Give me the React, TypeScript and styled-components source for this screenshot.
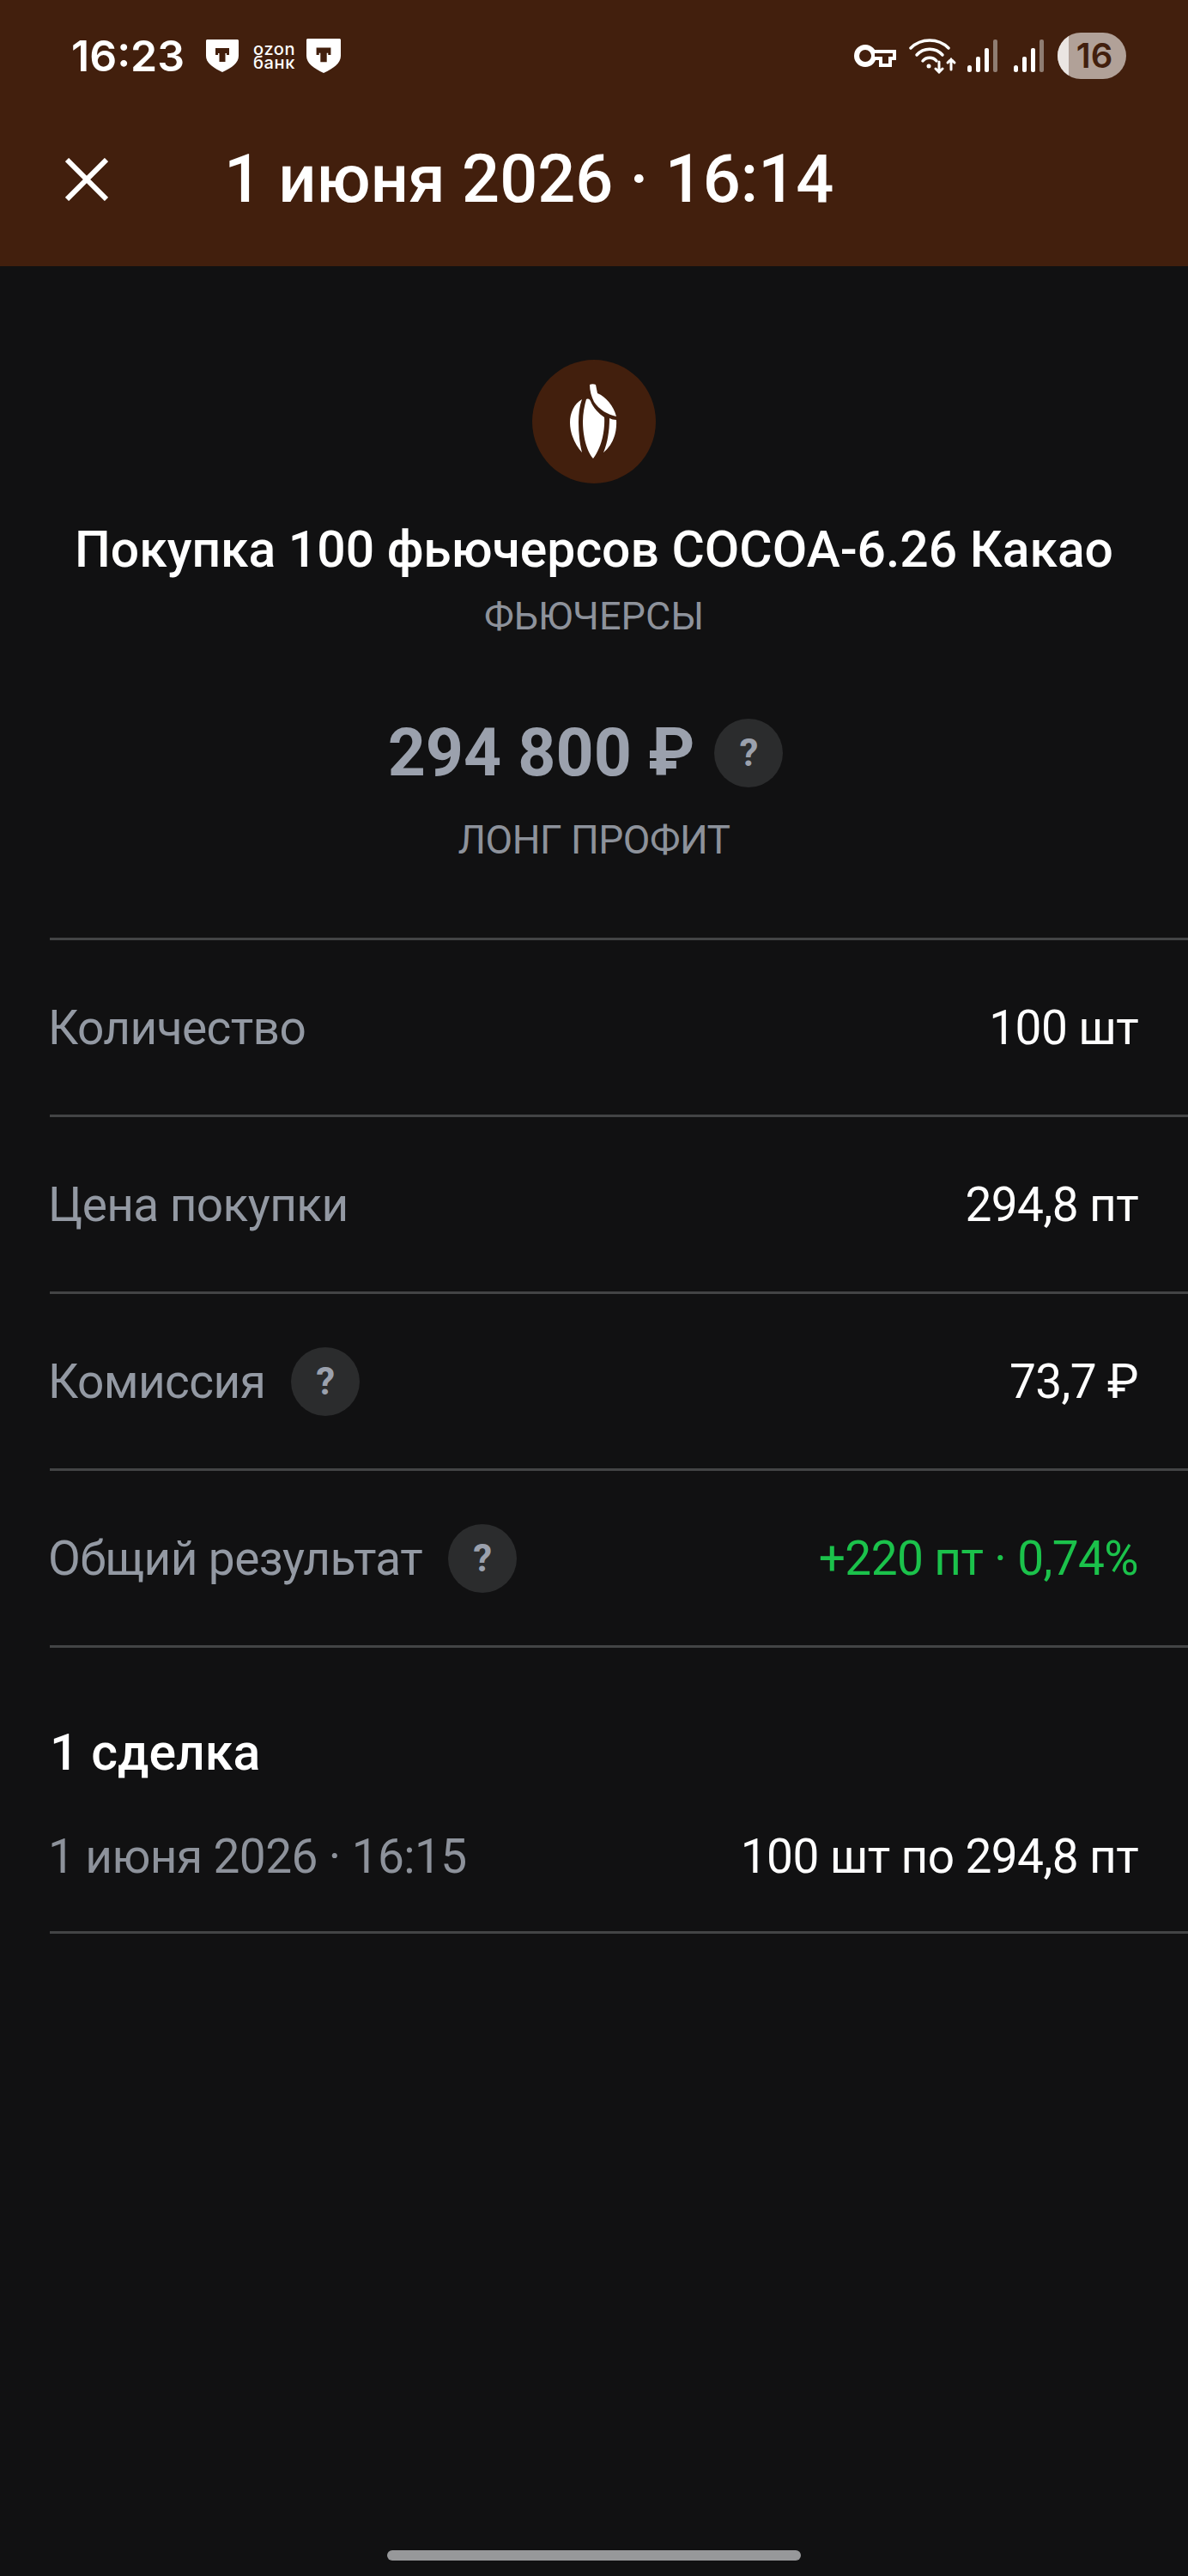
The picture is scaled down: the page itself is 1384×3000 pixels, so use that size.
import styled, { createGlobalStyle } from 'styled-components';

const GlobalStyle = createGlobalStyle`
  html, body {
    margin: 0;
    padding: 0;
    background: #111112;
  }
  body {
    font-family: Roboto, "Noto Sans", sans-serif;
  }
`;

const Page = styled.div`
  display: flex;
  flex-direction: column;
  width: 1384px;
  height: 3000px;
  overflow: hidden;
  background: #111112;
  color: #fff;
`;

const TopBar = styled.header`
  flex: none;
  height: 310px;
  background: #421f0d;
`;

const StatusBar = styled.div`
  display: flex;
  align-items: center;
  justify-content: space-between;
  height: 130px;
  padding: 0 72px 0 83px;
`;

const StatusGroup = styled.div`
  display: flex;
  align-items: center;
`;

const StatusIcon = styled.span<{ $left: number }>`
  display: flex;
  margin-left: ${(p) => p.$left}px;
`;

const Time = styled.span`
  font-family: Inter, Roboto, sans-serif;
  font-size: 50px;
  font-weight: 600;
  line-height: 58px;
  margin-right: 25px;
`;

const OzonMark = styled.div`
  margin: 0 12px 0 17px;
  font-family: Inter, Roboto, sans-serif;
  font-size: 20px;
  font-weight: 500;
  line-height: 16px;
  letter-spacing: 0.6px;
  white-space: pre-line;
`;

const Battery = styled.div`
  position: relative;
  width: 80px;
  height: 54px;
  margin-left: 16px;
  border-radius: 27px;
  overflow: hidden;
  background: #b1a198;
  color: #421f0d;
  font-family: Inter, Roboto, sans-serif;
  font-size: 40px;
  font-weight: 600;
  line-height: 54px;
  text-align: center;
  text-indent: 6px;

  &::before {
    content: '';
    position: absolute;
    left: 0;
    top: 0;
    bottom: 0;
    width: 13px;
    background: #eae5e2;
  }
`;

const TitleRow = styled.div`
  display: flex;
  align-items: center;
  height: 90px;
  margin-top: 34px;
  padding-left: 76px;
`;

const CloseButton = styled.div`
  display: flex;
  width: 185px;
`;

const Title = styled.h1`
  margin: 0;
  font-size: 77.5px;
  font-weight: 500;
  line-height: 90px;
  white-space: nowrap;
`;

const Hero = styled.section`
  display: flex;
  flex-direction: column;
  align-items: center;
  padding-top: 109px;
`;

const InstrumentLogo = styled.div`
  display: flex;
  align-items: center;
  justify-content: center;
  width: 144px;
  height: 144px;
  border-radius: 50%;
  background: #421f0d;
`;

const InstrumentName = styled.h2`
  margin: 39px 0 0;
  font-size: 58.8px;
  font-weight: 500;
  line-height: 76px;
  white-space: nowrap;
`;

const InstrumentType = styled.div`
  color: #8d929b;
  font-size: 45px;
  line-height: 60px;
  margin-top: 10px;
`;

const AmountRow = styled.div`
  display: flex;
  align-items: center;
  gap: 23px;
  margin-top: 84px;
  padding-right: 20px;
`;

const Amount = styled.span`
  color: #9ba1ad;
  font-size: 77px;
  font-weight: 700;
  line-height: 90px;
`;

const Caption = styled.div`
  color: #8d929b;
  font-size: 46px;
  letter-spacing: -0.5px;
  line-height: 60px;
  margin-top: 26px;
`;

const HelpBadge = styled.span`
  display: inline-flex;
  align-items: center;
  justify-content: center;
  flex: none;
  width: 80px;
  height: 80px;
  border-radius: 50%;
  background: #2b2c2d;
  color: #9ba1ad;
  font-size: 44px;
  font-weight: 700;
  letter-spacing: 0;
`;

const Rows = styled.section`
  margin-top: 84px;
  margin-left: 58px;
  border-top: 3px solid #434445;
`;

const Row = styled.div`
  display: flex;
  align-items: center;
  justify-content: space-between;
  box-sizing: border-box;
  height: 206px;
  padding-right: 58px;
  border-bottom: 3px solid #434445;
`;

const RowLabel = styled.div`
  display: flex;
  align-items: center;
  gap: 30px;
  margin-left: -2px;
  color: #9399a3;
  font-size: 55px;
  letter-spacing: -0.6px;
  line-height: 70px;
`;

const RowValue = styled.div<{ $positive?: boolean }>`
  color: ${(p) => (p.$positive ? '#1bc24b' : '#fff')};
  font-size: 55px;
  letter-spacing: -0.6px;
  line-height: 70px;
`;

const Trades = styled.section`
  margin-left: 58px;
`;

const TradesTitle = styled.h3`
  margin: 0;
  padding-top: 84px;
  font-size: 59px;
  font-weight: 500;
  line-height: 76px;
`;

const TradeRow = styled.div`
  display: flex;
  align-items: center;
  justify-content: space-between;
  box-sizing: border-box;
  height: 173px;
  padding: 0 58px 4px 0;
  border-bottom: 3px solid #434445;
`;

const TradeDate = styled.div`
  margin-left: -2px;
  color: #8d929b;
  font-size: 55px;
  letter-spacing: -0.6px;
  line-height: 70px;
`;

const HomeBar = styled.div`
  margin: auto auto 18px;
  width: 482px;
  height: 12px;
  border-radius: 6px;
  background: #97989a;
`;

const Shield = ({ width, height }: { width: number; height: number }) => (
  <svg width={width} height={height} viewBox="0 0 38 38">
    <path d="M1 0H37L38 1V19C38 27 30 33 19 38C8 33 0 27 0 19V1Z" fill="#fff" />
    <path d="M11 10H27V18H24V16H22.5V26H15.5V16H14V18H11Z" fill="#421f0d" />
  </svg>
);

const KeyIcon = () => (
  <svg width="49" height="28" viewBox="0 0 49 28" fill="none">
    <circle cx="13" cy="14" r="10" stroke="#fff" strokeWidth="6" />
    <path d="M22 7H49V19H44V27H29V19H22Z" fill="#fff" />
    <path d="M24 11H45V15H40V23H33V15H24Z" fill="#421f0d" />
    <rect x="9" y="12" width="11" height="4" rx="2" fill="#421f0d" />
  </svg>
);

const WifiIcon = () => (
  <svg width="56" height="42" viewBox="0 0 56 42" fill="none" stroke="#fff" strokeLinecap="round">
    <path d="M2 12C14 0 34 0 46 12" strokeWidth="3.5" />
    <path d="M9 20C17 11 31 11 39 20" strokeWidth="3.5" />
    <path d="M16 27C20 22 28 22 32 27" strokeWidth="3.5" />
    <circle cx="23" cy="33" r="2.5" fill="#fff" stroke="none" />
    <path d="M35 28V40M31 36L35 40L39 36" strokeWidth="3" />
    <path d="M49 37V25M45 29L49 25L53 29" strokeWidth="3" />
  </svg>
);

const SignalIcon = () => (
  <svg width="35" height="38" viewBox="0 0 35 38">
    <rect x="0" y="30" width="5" height="8" rx="2.5" fill="#fff" />
    <rect x="10" y="20" width="5" height="18" rx="2" fill="#fff" />
    <rect x="20" y="10" width="5" height="28" rx="2" fill="#fff" />
    <rect x="30" y="0" width="5" height="38" rx="2" fill="#8f7d72" />
  </svg>
);

const CloseIcon = () => (
  <svg width="50" height="50" viewBox="0 0 50 50" stroke="#fff" strokeWidth="6">
    <path d="M2 2L48 48M48 2L2 48" />
  </svg>
);

const CocoaIcon = () => (
  <svg width="56" height="88" viewBox="0 0 56 88" fill="#fff">
    <path d="M23 1C25 0 28 0 30 1L32 11C42 15 51 26 54 38C44 36 34 30 28 21C25 15 23 8 23 1Z" />
    <path d="M14 18C5 23 0 34 0 45C0 58 6 71 14 80C11 68 10 56 10 45C10 35 11 26 14 18Z" />
    <path d="M19 18C22 17 23 18 24 20C27 28 34 35 40 39C41 54 37 74 27 87C19 78 15 60 15 44C15 34 17 25 19 18Z" />
    <path d="M46 40C48 41 51 42 54 42C55 57 50 71 39 80C44 68 46 54 46 40Z" />
  </svg>
);

const App = () => {
  return (
    <>
      <GlobalStyle />
      <Page>
        <TopBar>
          <StatusBar>
            <StatusGroup>
              <Time>16:23</Time>
              <Shield width={38} height={38} />
              <OzonMark>{'ozon\nбанк'}</OzonMark>
              <Shield width={42} height={40} />
            </StatusGroup>
            <StatusGroup>
              <KeyIcon />
              <StatusIcon $left={15}>
                <WifiIcon />
              </StatusIcon>
              <StatusIcon $left={12}>
                <SignalIcon />
              </StatusIcon>
              <StatusIcon $left={19}>
                <SignalIcon />
              </StatusIcon>
              <Battery>16</Battery>
            </StatusGroup>
          </StatusBar>
          <TitleRow>
            <CloseButton>
              <CloseIcon />
            </CloseButton>
            <Title>1 июня 2026 · 16:14</Title>
          </TitleRow>
        </TopBar>

        <Hero>
          <InstrumentLogo>
            <CocoaIcon />
          </InstrumentLogo>
          <InstrumentName>Покупка 100 фьючерсов COCOA-6.26 Какао</InstrumentName>
          <InstrumentType>ФЬЮЧЕРСЫ</InstrumentType>
          <AmountRow>
            <Amount>294 800 ₽</Amount>
            <HelpBadge>?</HelpBadge>
          </AmountRow>
          <Caption>ЛОНГ ПРОФИТ</Caption>
        </Hero>

        <Rows>
          <Row>
            <RowLabel>Количество</RowLabel>
            <RowValue>100 шт</RowValue>
          </Row>
          <Row>
            <RowLabel>Цена покупки</RowLabel>
            <RowValue>294,8 пт</RowValue>
          </Row>
          <Row>
            <RowLabel>
              Комиссия
              <HelpBadge>?</HelpBadge>
            </RowLabel>
            <RowValue>73,7 ₽</RowValue>
          </Row>
          <Row>
            <RowLabel>
              Общий результат
              <HelpBadge>?</HelpBadge>
            </RowLabel>
            <RowValue $positive>+220 пт · 0,74%</RowValue>
          </Row>
        </Rows>

        <Trades>
          <TradesTitle>1 сделка</TradesTitle>
          <TradeRow>
            <TradeDate>1 июня 2026 · 16:15</TradeDate>
            <RowValue>100 шт по 294,8 пт</RowValue>
          </TradeRow>
        </Trades>

        <HomeBar />
      </Page>
    </>
  );
};

export default App;
